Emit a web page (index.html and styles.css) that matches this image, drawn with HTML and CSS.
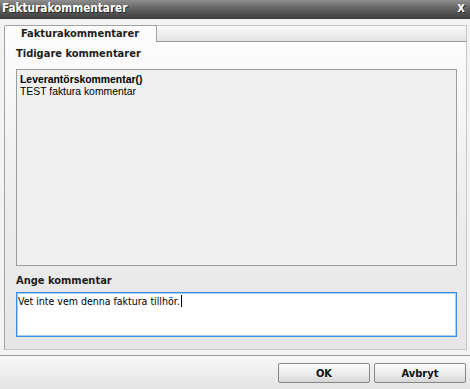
FILE: index.html
```html
<!DOCTYPE html>
<html lang="sv">
<head>
  <meta charset="UTF-8">
  <title>Fakturakommentarer</title>
  <link rel="stylesheet" href="styles.css">
</head>
<body>

  <div class="dialog">
    <div class="titlebar">
      <span class="title">Fakturakommentarer</span>
      <span class="close">X</span>
    </div>

    <div class="main">
      <div class="tabs">
        <div class="tab">Fakturakommentarer</div>
        <div class="tab-fill"></div>
      </div>

      <div class="panel">
        <div class="label">Tidigare kommentarer</div>
        <div class="history">
          <div class="history-author">Leverantörskommentar()</div>
          <div class="history-text">TEST faktura kommentar</div>
        </div>

        <div class="label label-new">Ange kommentar</div>
        <div class="comment-input">Vet inte vem denna faktura tillhör.<span class="caret"></span></div>
      </div>
    </div>

    <!-- Buttons -->
    <div class="footer">
      <button class="btn">OK</button>
      <button class="btn">Avbryt</button>
    </div>
  </div>

</body>
</html>
```

FILE: styles.css
```css
body {
  margin: 0;
  padding: 0;
  font-family: "DejaVu Sans Condensed", "DejaVu Sans", sans-serif;
  font-stretch: condensed;
  font-size: 11px;
  color: #1e1e1e;
  background-color: #f3f3f3;
}

.dialog {
  width: 470px;
  height: 389px;
  display: flex;
  flex-direction: column;
  overflow: hidden;
}

.titlebar {
  height: 19px;
  box-sizing: border-box;
  padding: 0 5px 2px 2px;
  display: flex;
  justify-content: space-between;
  align-items: center;
  background: linear-gradient(to bottom, #8f8f8f 0%, #626262 45%, #3d3d3d 100%);
  color: #fff;
  font-weight: bold;
  text-shadow: 1px 1px 0 #2a2a2a;
}

.title {
  font-size: 11.7px;
  line-height: 17px;
}

.close {
  font-size: 11px;
  line-height: 17px;
}

.main {
  height: 336px;
  box-sizing: border-box;
  padding: 6px 3px 5px 4px;
  background-color: #f3f3f3;
}

.tabs {
  display: flex;
  height: 17px;
}

.tab {
  width: 153px;
  height: 17px;
  box-sizing: border-box;
  padding: 1px 0 0 16px;
  line-height: 13px;
  font-weight: bold;
  color: #1e1e1e;
  background-color: #fcfcfc;
  border: 1px solid #a2a2a2;
  border-bottom: none;
  border-radius: 2px 0 0 0;
}

.tab-fill {
  flex: 1;
  height: 17px;
  box-sizing: border-box;
  border-top: 1px solid #c4c4c4;
  border-right: 1px solid #c4c4c4;
  border-bottom: 1px solid #9a9a9a;
  background: linear-gradient(to bottom, #fafafa, #e4e4e4);
}

.panel {
  height: 308px;
  box-sizing: border-box;
  padding: 5px 9px 12px 11px;
  border: 1px solid #c8c8c8;
  border-top: none;
  border-left-color: #a2a2a2;
  background: linear-gradient(to bottom, #fcfcfc 0%, #efefef 45%, #e6e6e6 100%);
}

.label {
  font-weight: bold;
  line-height: 13px;
}

.history {
  margin-top: 9px;
  height: 197px;
  box-sizing: border-box;
  padding: 4px 3px;
  border: 1px solid #9c9c9c;
  background-color: #f0f0f0;
  font-family: "Liberation Sans", Arial, sans-serif;
  font-stretch: normal;
  font-size: 10.4px;
  line-height: 11.5px;
  color: #000;
}

.history-author {
  font-weight: bold;
}

.label-new {
  margin-top: 8px;
}

.comment-input {
  margin-top: 5px;
  height: 45px;
  box-sizing: border-box;
  padding: 2px 1px;
  border: 1px solid #3a8ee6;
  box-shadow: inset 0 0 0 1px #a9cff5;
  background-color: #fff;
  font-size: 10.5px;
  line-height: 13px;
  color: #000;
}

.caret {
  display: inline-block;
  width: 1px;
  height: 12px;
  margin-left: 1px;
  vertical-align: -2px;
  background-color: #000;
}

.footer {
  height: 34px;
  box-sizing: border-box;
  padding: 7px 4px 0 0;
  display: flex;
  justify-content: flex-end;
  gap: 4px;
  border-top: 1px solid #9a9a9a;
  background: linear-gradient(to bottom, #f8f8f8, #e3e3e3);
}

.btn {
  width: 92px;
  height: 20px;
  padding: 0;
  font-family: inherit;
  font-stretch: condensed;
  font-size: 11px;
  font-weight: bold;
  color: #111;
  border: 1px solid #868686;
  border-radius: 2px;
  background: linear-gradient(to bottom, #fdfdfd, #e9e9e9 60%, #d6d6d6);
  cursor: pointer;
}
```
